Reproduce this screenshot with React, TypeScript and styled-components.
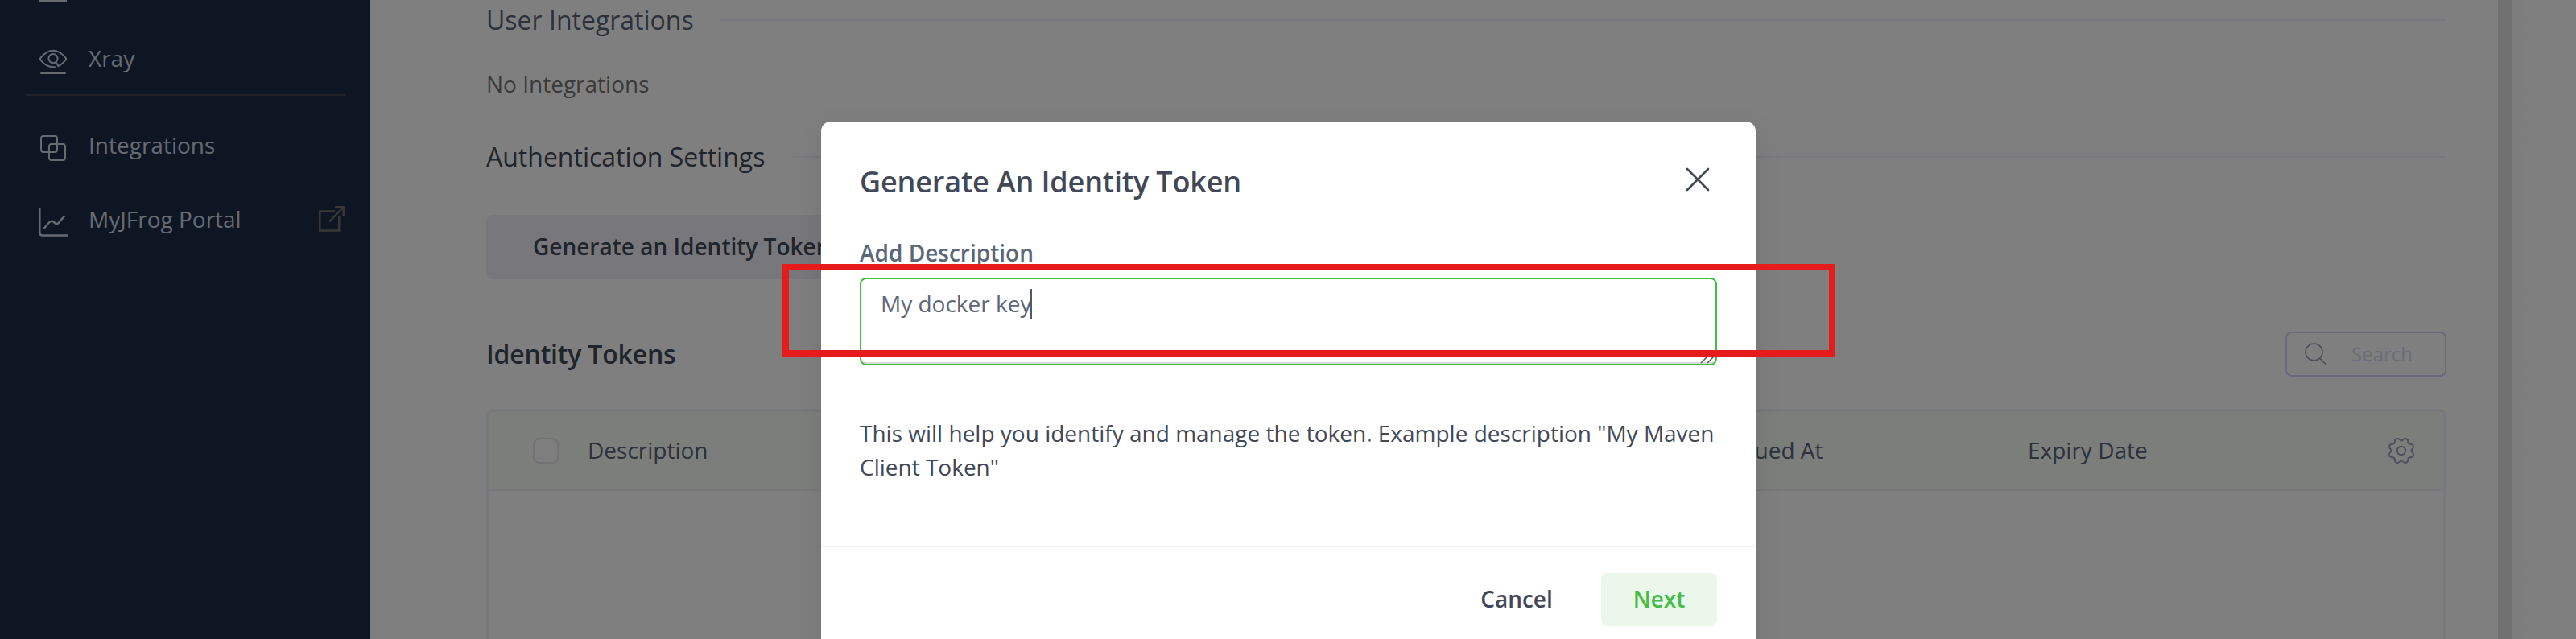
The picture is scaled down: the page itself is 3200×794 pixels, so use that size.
import React from "react";
import styled, { createGlobalStyle } from "styled-components";

const GlobalStyle = createGlobalStyle`
  * { box-sizing: border-box; }
  html, body { margin: 0; padding: 0; overflow: hidden; }
  body { font-family: "Open Sans", "Noto Sans", sans-serif; font-size: 28px; line-height: 42px; background: #fff; }
  h1, h2, h3, p { margin: 0; }
  button { font: inherit; border: 0; padding: 0; background: none; }
  svg { display: block; flex: none; fill: none; stroke: currentColor; overflow: visible; }
`;

const Page = styled.div`
  position: relative;
  display: flex;
  width: 3200px;
  height: 794px;
  overflow: hidden;
`;

const Sidebar = styled.nav`
  width: 460px;
  height: 100%;
  padding: 0 32px;
  background: #1e2c46;
  color: #ccd4e2;
`;

const CutIcon = styled.div`
  width: 34px;
  height: 2px;
  margin-left: 17px;
  background: #ccd4e2;
`;

const NavItem = styled.div<{ $top: number }>`
  display: flex;
  align-items: center;
  height: 42px;
  margin-top: ${(p) => p.$top}px;
  padding-left: 16px;
`;

const NavIcon = styled.span<{ $shift?: number }>`
  width: 62px;
  margin-top: ${(p) => p.$shift ?? 0}px;
`;

const ExternalIcon = styled.span`
  margin-left: auto;
  color: #74716a;
`;

const NavDivider = styled.div`
  height: 2px;
  margin-top: 24px;
  background: #3f4753;
`;

const Content = styled.main`
  display: flex;
  flex-direction: column;
  width: 2643px;
  padding: 3px 64px 0 144px;
  background: linear-gradient(90deg, #fdfdfd 0 76px, #fff 84px);
`;

const ScrollTrack = styled.div`
  width: 18px;
  background: #e2e2e2;
`;

const Gutter = styled.div`
  flex: 1;
  background: linear-gradient(90deg, #f8f8f8, #fff 24px);
`;

const SectionHeading = styled.h2<{ $color: string; $gap: number }>`
  display: flex;
  align-items: center;
  gap: ${(p) => p.$gap}px;
  height: 44px;
  font-size: 32px;
  line-height: 44px;
  font-weight: 400;
  color: ${(p) => p.$color};
  &::after { content: ""; flex: 1; height: 2px; background: #f0f0fa; }
`;

const EmptyNote = styled.p`
  margin: 36px 0 48px;
  color: #757575;
`;

const GenerateButton = styled.button`
  align-self: flex-start;
  height: 80px;
  margin-top: 50px;
  padding: 0 58px 2px;
  border-radius: 8px;
  background: #f0f1f8;
  color: #414857;
  font-weight: 600;
`;

const TokensBar = styled.div`
  display: flex;
  align-items: center;
  justify-content: space-between;
  height: 56px;
  margin-top: 65px;
`;

const TokensTitle = styled.h3`
  font-size: 32px;
  line-height: 44px;
  font-weight: 600;
  letter-spacing: -0.2px;
  color: #414857;
`;

const SearchBox = styled.div`
  display: flex;
  align-items: center;
  gap: 30px;
  width: 200px;
  height: 56px;
  padding-left: 22px;
  border: 2px solid #d0d4ee;
  border-radius: 8px;
  font-size: 24px;
  color: #d6daf0;
  svg { color: #a0a1b8; }
`;

const Table = styled.div`
  flex: 1;
  margin-top: 40px;
  border: 4px solid #f0f0fa;
  border-bottom: 0;
  border-radius: 10px 10px 0 0;
`;

const TableHead = styled.div`
  display: grid;
  grid-template-columns: 68px 1415px 374px 1fr 32px;
  align-items: center;
  height: 98px;
  padding: 0 36px 0 54px;
  border-bottom: 2px solid #f0f0fa;
  background: #f8fcf9;
  color: #5b6377;
  svg { color: #a0a1b8; }
`;

const ColumnName = styled.span`
  padding-bottom: 2px;
`;

const Checkbox = styled.span`
  width: 32px;
  height: 32px;
  border: 2px solid #e4e4ee;
  border-radius: 8px;
  background: #fcfcfc;
`;

const Backdrop = styled.div`
  position: absolute;
  inset: 0;
  background: rgba(0, 0, 0, 0.5);
`;

const Modal = styled.section`
  position: absolute;
  left: 1020px;
  top: 151px;
  width: 1161px;
  height: 680px;
  padding-top: 49px;
  border-radius: 12px;
  background: #fff;
  color: #414857;
  box-shadow: 0 10px 32px rgba(0, 0, 0, 0.1);
`;

const ModalHeader = styled.header`
  display: flex;
  justify-content: space-between;
  height: 50px;
  padding: 0 57px 0 48px;
`;

const ModalTitle = styled.h1`
  padding-top: 1px;
  font-size: 36px;
  line-height: 50px;
  font-weight: 600;
  letter-spacing: -0.15px;
`;

const CloseButton = styled.button`
  height: 46px;
  color: #414857;
`;

const ModalBody = styled.div`
  padding: 43px 48px 77px;
`;

const Label = styled.div`
  font-weight: 600;
  color: #5b6779;
`;

const TextArea = styled.div`
  position: relative;
  display: flex;
  height: 109px;
  margin-top: 10px;
  padding: 9px 24px;
  border: 2px solid #40be46;
  border-radius: 8px;
  box-shadow: inset 0 -2px 0 #dadada;
  color: #5b6779;
`;

const Caret = styled.span`
  width: 2px;
  height: 37px;
  margin: 3px 0 0 -1px;
  background: #4c5a6e;
`;

const Grip = styled.span`
  position: absolute;
  right: 2px;
  bottom: 1px;
  color: #555;
`;

const HelpText = styled.p`
  margin-top: 63px;
`;

const ModalFooter = styled.footer`
  display: flex;
  justify-content: flex-end;
  gap: 20px;
  padding: 32px 48px;
  border-top: 2px solid #f0f0f0;
`;

const ActionButton = styled.button<{ $primary?: boolean }>`
  width: ${(p) => (p.$primary ? 144 : 170)}px;
  height: 66px;
  padding-bottom: 3px;
  border-radius: 8px;
  font-weight: 600;
  color: ${(p) => (p.$primary ? "#40be46" : "#414857")};
  background: ${(p) => (p.$primary ? "#ebf7eb" : "transparent")};
`;

const Highlight = styled.div`
  position: absolute;
  left: 972px;
  top: 328px;
  width: 1308px;
  height: 115px;
  border: 8px solid #e61c1c;
`;

const EyeIcon = () => (
  <svg width="36" height="32" viewBox="0 0 36 32" strokeWidth="2" strokeLinecap="round" strokeLinejoin="round">
    <path d="M20 23.2C12 24 6.500 19.500 2.300 14.300C1.600 13.400 1.600 12.800 2.300 12C6 7.500 11 2.800 18 2.800S30 7.500 33.700 12C34.400 12.800 34.400 13.400 33.700 14.300C31 17.600 28 20.500 24.500 22.200L21.600 17.200" />
    <circle cx="18" cy="12.600" r="5.600" />
    <path d="M3 31H33" />
  </svg>
);

const IntegrationsIcon = () => (
  <svg width="36" height="32" viewBox="0 0 36 32" strokeWidth="2">
    <rect x="3" y="1" width="20" height="20" rx="3" />
    <rect x="13" y="11" width="20" height="20" rx="3" />
  </svg>
);

const ChartIcon = () => (
  <svg width="36" height="36" viewBox="0 0 36 36" strokeWidth="2.500">
    <path d="M1.300 0V31Q1.300 34.600 5 34.600H36" />
    <path d="M6.500 26L13 18.500Q16 15 19 18L20 19Q23 21.500 25.500 18L32.500 10" />
  </svg>
);

const OpenIcon = () => (
  <svg width="32" height="32" viewBox="0 0 32 32" strokeWidth="2.500">
    <path d="M20 6.500H1.300V30.500H25.300V12.500M13 19.500L30 2M20 1.300H30.700V12" />
  </svg>
);

const SearchIcon = () => (
  <svg width="28" height="28" viewBox="0 0 28 28" strokeWidth="1.600">
    <circle cx="11.500" cy="11.500" r="10.500" />
    <path d="M18.500 19L27 27.500" />
  </svg>
);

const GearIcon = () => (
  <svg width="32" height="32" viewBox="0 0 32 32" strokeWidth="2" strokeLinejoin="round">
    <circle cx="16" cy="16" r="5.200" />
    <path d="M16 3.600C18 3.600 18.200 1 20.500 1C23 1 24.300 2.500 24.300 5C24.300 6.800 25.200 7.700 27 7.700C29.500 7.700 31 9 31 11.500C31 13.800 28.400 14 28.400 16C28.400 18 31 18.200 31 20.500C31 23 29.500 24.300 27 24.300C25.200 24.300 24.300 25.200 24.300 27C24.300 29.500 23 31 20.500 31C18.200 31 18 28.400 16 28.400C14 28.400 13.800 31 11.500 31C9 31 7.700 29.500 7.700 27C7.700 25.200 6.800 24.300 5 24.300C2.500 24.300 1 23 1 20.500C1 18.200 3.600 18 3.600 16C3.600 14 1 13.800 1 11.500C1 9 2.500 7.700 5 7.700C6.800 7.700 7.700 6.800 7.700 5C7.700 2.500 9 1 11.500 1C13.800 1 14 3.600 16 3.600Z" />
  </svg>
);

const CloseIcon = () => (
  <svg width="30" height="30" viewBox="0 0 30 30" strokeWidth="2.600" strokeLinecap="round">
    <path d="M2 2L28 28M28 2L2 28" />
  </svg>
);

const GripIcon = () => (
  <svg width="16" height="16" viewBox="0 0 16 16" strokeWidth="1.500">
    <path d="M0 16L15 1M8 16L16 8" />
  </svg>
);

export default function App() {
  return (
    <Page>
      <GlobalStyle />
      <Sidebar>
        <CutIcon />
        <NavItem $top={49}>
          <NavIcon $shift={7}><EyeIcon /></NavIcon>
          Xray
        </NavItem>
        <NavDivider />
        <NavItem $top={40}>
          <NavIcon $shift={8}><IntegrationsIcon /></NavIcon>
          Integrations
        </NavItem>
        <NavItem $top={50}>
          <NavIcon $shift={8}><ChartIcon /></NavIcon>
          MyJFrog Portal
          <ExternalIcon><OpenIcon /></ExternalIcon>
        </NavItem>
      </Sidebar>
      <Content>
        <SectionHeading $color="#5b6377" $gap={32}>User Integrations</SectionHeading>
        <EmptyNote>No Integrations</EmptyNote>
        <SectionHeading $color="#414857" $gap={32}>Authentication Settings</SectionHeading>
        <GenerateButton>Generate an Identity Token</GenerateButton>
        <TokensBar>
          <TokensTitle>Identity Tokens</TokensTitle>
          <SearchBox><SearchIcon />Search</SearchBox>
        </TokensBar>
        <Table>
          <TableHead>
            <Checkbox />
            <ColumnName>Description</ColumnName>
            <ColumnName>Issued At</ColumnName>
            <ColumnName>Expiry Date</ColumnName>
            <GearIcon />
          </TableHead>
        </Table>
      </Content>
      <ScrollTrack />
      <Gutter />
      <Backdrop />
      <Modal>
        <ModalHeader>
          <ModalTitle>Generate An Identity Token</ModalTitle>
          <CloseButton aria-label="Close"><CloseIcon /></CloseButton>
        </ModalHeader>
        <ModalBody>
          <Label>Add Description</Label>
          <TextArea>
            My docker key
            <Caret />
            <Grip><GripIcon /></Grip>
          </TextArea>
          <HelpText>
            This will help you identify and manage the token. Example description "My Maven Client Token"
          </HelpText>
        </ModalBody>
        <ModalFooter>
          <ActionButton>Cancel</ActionButton>
          <ActionButton $primary>Next</ActionButton>
        </ModalFooter>
      </Modal>
      <Highlight />
    </Page>
  );
}
